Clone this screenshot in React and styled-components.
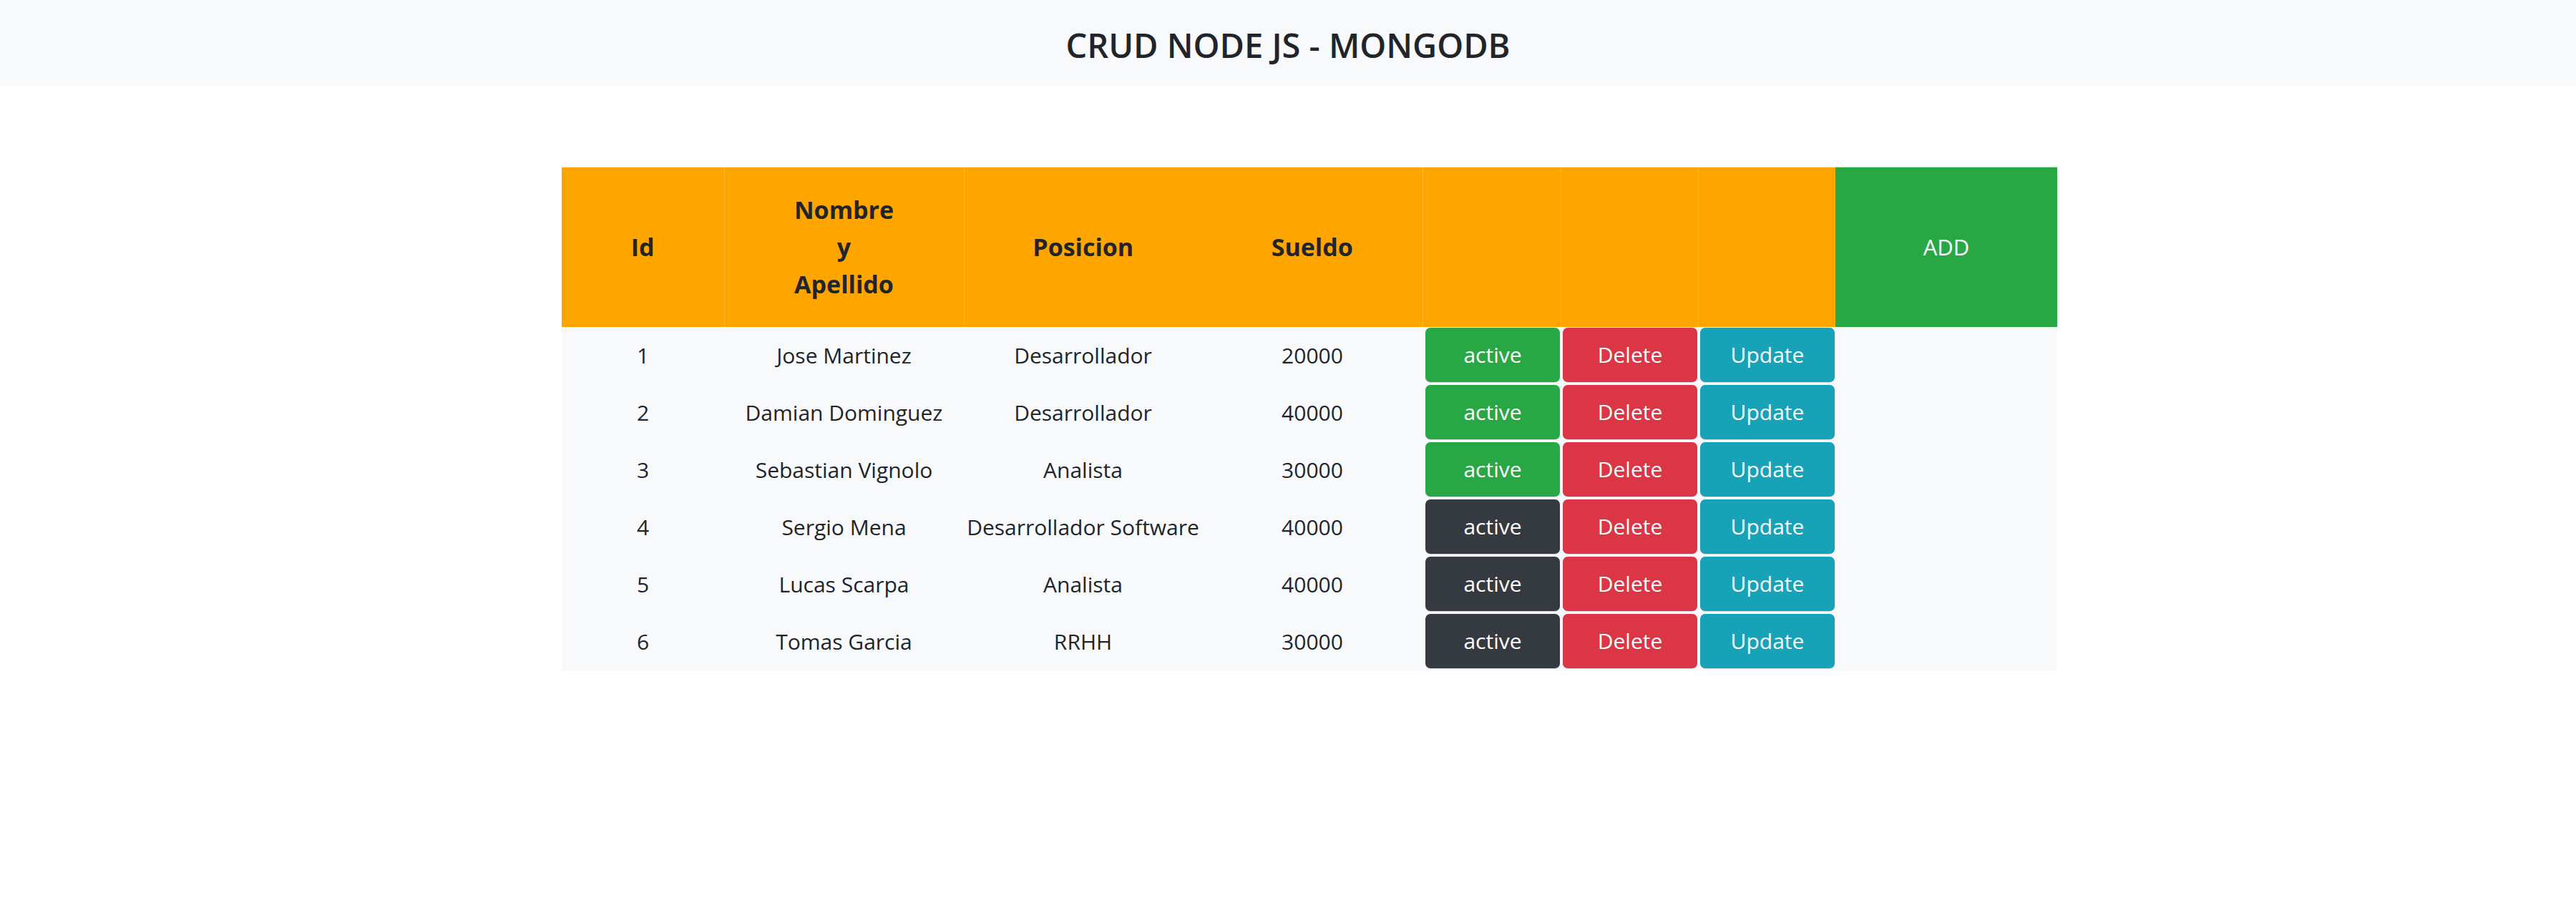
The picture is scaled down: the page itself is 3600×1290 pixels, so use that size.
import React from "react";
import styled, { createGlobalStyle } from "styled-components";

const GlobalStyle = createGlobalStyle`
  html, body { margin: 0; padding: 0; background: #ffffff; }
  body {
    font-family: "Open Sans", "Noto Sans", Roboto, sans-serif;
    color: #212529;
  }
`;

const TopBar = styled.header`
  height: 120px;
  background: #f8f9fa;
  display: flex;
  align-items: center;
  justify-content: center;
`;

const Title = styled.h1`
  margin: 0;
  font-size: 47px;
  font-weight: 600;
  color: #212529;
  line-height: 1.2;
  padding-top: 7px;
`;

const Main = styled.main`
  padding: 113px 0 0 785px;
`;

const Table = styled.table`
  width: 2090px;
  border-collapse: collapse;
  table-layout: fixed;
`;

const HeadRow = styled.tr`
  height: 223px;
`;

const HeadCell = styled.th`
  background: #ffa500;
  border-top: 1px solid rgba(255, 240, 215, 0.8);
  border-left: ${(p) => (p.$plain ? "none" : "1px solid rgba(255, 255, 255, 0.18)")};
  font-size: 34px;
  font-weight: 700;
  line-height: 52px;
  color: #212529;
  text-align: center;
  vertical-align: middle;
  padding: 0;
`;

const AddCell = styled.th`
  background: #28a745;
  border-top: 1px solid rgba(210, 215, 210, 0.9);
  color: #ffffff;
  font-size: 31px;
  font-weight: 400;
  text-align: center;
  vertical-align: middle;
  padding: 0;
  cursor: pointer;
`;

const BodyRow = styled.tr`
  height: 80px;
  background: #f8f9fa;
`;

const Cell = styled.td`
  font-size: 30px;
  color: #212529;
  text-align: center;
  vertical-align: middle;
  padding: 0;
  white-space: nowrap;
`;

const ActionCell = styled.td`
  padding: 1px 1px 3px ${(p) => (p.$wide ? "4px" : "3px")};
  vertical-align: top;
`;

const colors = {
  success: "#28a745",
  dark: "#343a40",
  danger: "#dc3545",
  info: "#17a2b8",
};

const ActionButton = styled.button`
  display: flex;
  align-items: center;
  justify-content: center;
  width: 100%;
  height: 76px;
  border: none;
  border-radius: 7px;
  background: ${(p) => colors[p.$variant]};
  color: #ffffff;
  font-family: "Open Sans", "Noto Sans", Roboto, sans-serif;
  font-size: 30px;
  font-weight: 400;
  padding: 0;
  box-shadow: 0 1px 0 rgba(0, 0, 0, 0.12);
  cursor: pointer;
`;

const rows = [
  { id: 1, name: "Jose Martinez", pos: "Desarrollador", pay: 20000, active: true },
  { id: 2, name: "Damian Dominguez", pos: "Desarrollador", pay: 40000, active: true },
  { id: 3, name: "Sebastian Vignolo", pos: "Analista", pay: 30000, active: true },
  { id: 4, name: "Sergio Mena", pos: "Desarrollador Software", pay: 40000, active: false },
  { id: 5, name: "Lucas Scarpa", pos: "Analista", pay: 40000, active: false },
  { id: 6, name: "Tomas Garcia", pos: "RRHH", pay: 30000, active: false },
];

const widths = [227, 335, 333, 308, 193, 192, 192, 310];

export default function App() {
  return (
    <>
      <GlobalStyle />
      <TopBar>
        <Title>CRUD NODE JS - MONGODB</Title>
      </TopBar>
      <Main>
        <Table>
          <colgroup>
            {widths.map((w, i) => (
              <col key={i} style={{ width: w }} />
            ))}
          </colgroup>
          <thead>
            <HeadRow>
              <HeadCell $plain>Id</HeadCell>
              <HeadCell>
                Nombre
                <br />y<br />
                Apellido
              </HeadCell>
              <HeadCell>Posicion</HeadCell>
              <HeadCell $plain>Sueldo</HeadCell>
              <HeadCell />
              <HeadCell />
              <HeadCell />
              <AddCell>ADD</AddCell>
            </HeadRow>
          </thead>
          <tbody>
            {rows.map((r) => (
              <BodyRow key={r.id}>
                <Cell>{r.id}</Cell>
                <Cell>{r.name}</Cell>
                <Cell>{r.pos}</Cell>
                <Cell>{r.pay}</Cell>
                <ActionCell $wide>
                  <ActionButton $variant={r.active ? "success" : "dark"}>active</ActionButton>
                </ActionCell>
                <ActionCell>
                  <ActionButton $variant="danger">Delete</ActionButton>
                </ActionCell>
                <ActionCell>
                  <ActionButton $variant="info">Update</ActionButton>
                </ActionCell>
                <Cell />
              </BodyRow>
            ))}
          </tbody>
        </Table>
      </Main>
    </>
  );
}
